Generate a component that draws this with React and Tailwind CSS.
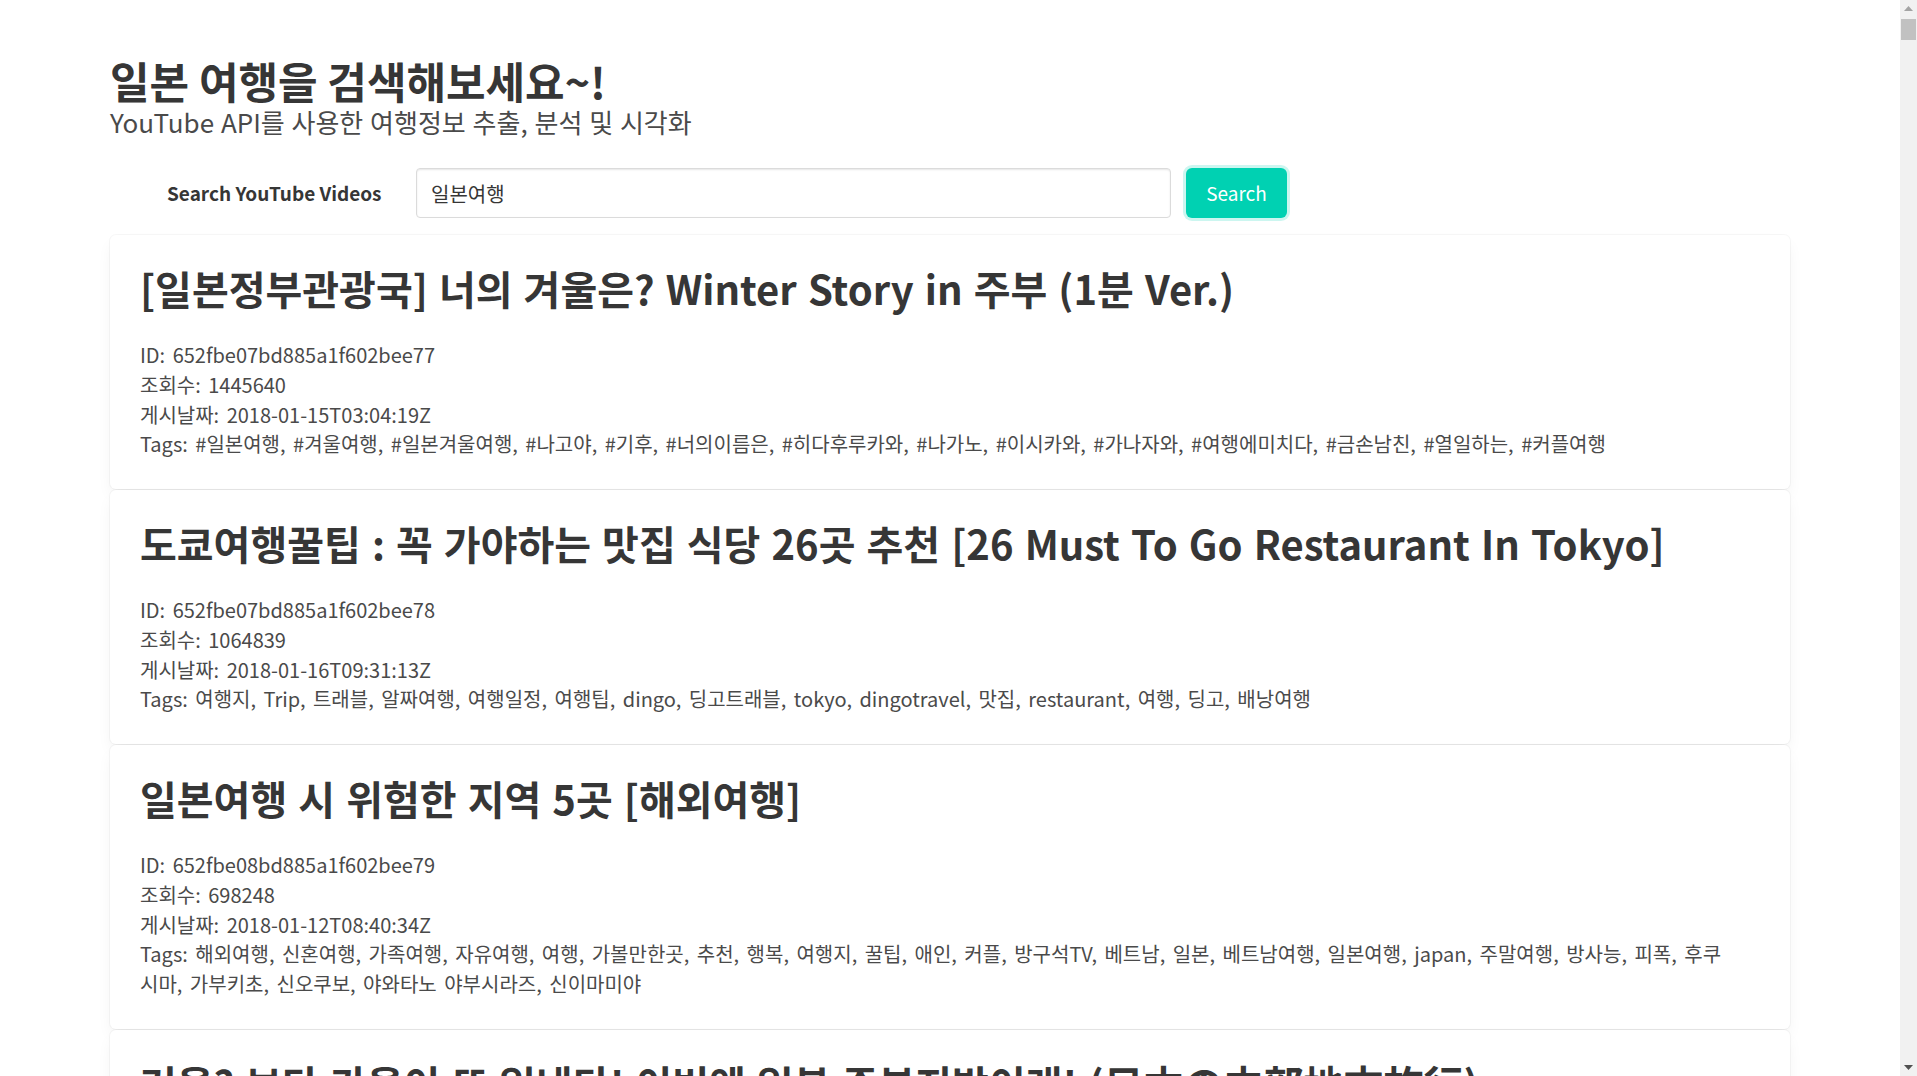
import { useState } from 'react'

const videos = [
  {
    title: '[일본정부관광국] 너의 겨울은? Winter Story in 주부 (1분 Ver.)',
    id: '652fbe07bd885a1f602bee77',
    views: '1445640',
    date: '2018-01-15T03:04:19Z',
    tags: ['#일본여행, #겨울여행, #일본겨울여행, #나고야, #기후, #너의이름은, #히다후루카와, #나가노, #이시카와, #가나자와, #여행에미치다, #금손남친, #열일하는, #커플여행'],
  },
  {
    title: '도쿄여행꿀팁 : 꼭 가야하는 맛집 식당 26곳 추천 [26 Must To Go Restaurant In Tokyo]',
    id: '652fbe07bd885a1f602bee78',
    views: '1064839',
    date: '2018-01-16T09:31:13Z',
    tags: ['여행지, Trip, 트래블, 알짜여행, 여행일정, 여행팁, dingo, 딩고트래블, tokyo, dingotravel, 맛집, restaurant, 여행, 딩고, 배낭여행'],
  },
  {
    title: '일본여행 시 위험한 지역 5곳 [해외여행]',
    id: '652fbe08bd885a1f602bee79',
    views: '698248',
    date: '2018-01-12T08:40:34Z',
    // the reference wraps inside 후쿠시마, keep that break
    tags: [
      '해외여행, 신혼여행, 가족여행, 자유여행, 여행, 가볼만한곳, 추천, 행복, 여행지, 꿀팁, 애인, 커플, 방구석TV, 베트남, 일본, 베트남여행, 일본여행, japan, 주말여행, 방사능, 피폭, 후쿠',
      '시마, 가부키초, 신오쿠보, 야와타노 야부시라즈, 신이마미야',
    ],
  },
  {
    title: '겨울? 보다 가을이 또 일낸다! 이번엔 일본 주부지방이래! (日本の中部地方旅行)',
    id: '652fbe08bd885a1f602bee7a',
    views: '512370',
    date: '2018-01-10T02:11:05Z',
    tags: ['일본여행, 주부지방, 가을여행'],
  },
]

function VideoBox({ video }) {
  return (
    <div className="bg-white rounded-md p-[30px] shadow-[0_0.5em_1em_-0.125em_rgba(10,10,10,0.06),0_0_0_1px_rgba(10,10,10,0.03)]">
      <h2 className="text-[40px] leading-[46px] font-semibold text-[#363636] mb-[29px] [word-spacing:2px]">{video.title}</h2>
      <div className="text-[20px] leading-[29.75px] text-[#4a4a4a] [word-spacing:3px]">
        <p>ID: {video.id}</p>
        <p>조회수: {video.views}</p>
        <p>게시날짜: {video.date}</p>
        <p>
          Tags:{' '}
          {video.tags.map((line, i) => (
            <span key={i}>
              {i > 0 && <br />}
              {line}
            </span>
          ))}
        </p>
      </div>
    </div>
  )
}

function Scrollbar() {
  return (
    <div className="sticky top-0 h-screen w-[17px] shrink-0 bg-[#f1f1f1] flex flex-col items-center">
      <div className="h-[17px] w-full flex items-center justify-center">
        <svg width="9" height="5" viewBox="0 0 9 5">
          <path d="M4.5 0 L9 5 L0 5 Z" fill="#a3a3a3" />
        </svg>
      </div>
      <div className="mt-[2px] h-[21px] w-[15px] bg-[#c1c1c1]" />
      <div className="flex-1" />
      <div className="h-[17px] w-full flex items-center justify-center">
        <svg width="9" height="5" viewBox="0 0 9 5">
          <path d="M0 0 L9 0 L4.5 5 Z" fill="#505050" />
        </svg>
      </div>
    </div>
  )
}

export default function App() {
  const [query, setQuery] = useState('일본여행')

  return (
    <div className="flex bg-white" style={{ fontFamily: '"Noto Sans CJK KR", "Noto Sans", sans-serif' }}>
      <div className="flex-1 min-w-0 px-[110px] pt-[57px]">
        <h1 className="text-[43px] leading-[46px] font-semibold text-[#363636]">일본 여행을 검색해보세요~!</h1>
        <p className="text-[26px] leading-[30px] text-[#4a4a4a] mt-[4px] [word-spacing:1px]">YouTube API를 사용한 여행정보 추출, 분석 및 시각화</p>

        {/* search bar */}
        <form className="flex items-center mt-[31px] mb-[17px]" onSubmit={(e) => e.preventDefault()}>
          <label className="w-[306px] pl-[57px] text-[19px] font-bold text-[#363636]">Search YouTube Videos</label>
          <input
            className="w-[755px] h-[50px] px-[14px] text-[20px] text-[#363636] border border-[#dbdbdb] rounded-[4px] shadow-[inset_0_1px_2px_rgba(10,10,10,0.1)] focus:outline-none"
            value={query}
            onChange={(e) => setQuery(e.target.value)}
          />
          <button
            type="submit"
            className="ml-[15px] w-[101px] h-[50px] bg-[#00d1b2] text-white text-[19px] rounded-[6px] shadow-[0_0_0_3px_rgba(0,209,178,0.2)]"
          >
            Search
          </button>
        </form>

        <div className="flex flex-col gap-px pb-[40px]">
          {videos.map((v) => (
            <VideoBox key={v.id} video={v} />
          ))}
        </div>
      </div>
      <Scrollbar />
    </div>
  )
}
